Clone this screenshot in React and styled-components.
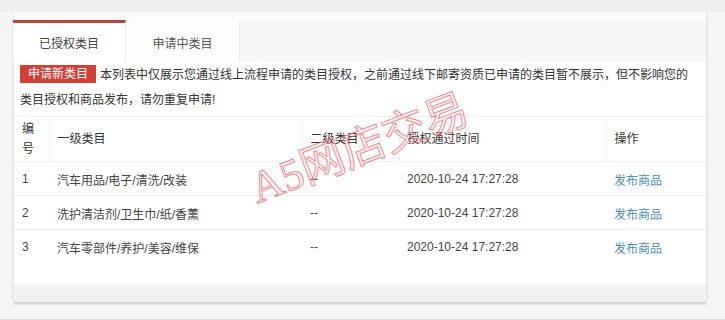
import React from "react";
import styled, { createGlobalStyle } from "styled-components";

const Global = createGlobalStyle`
  html, body { margin: 0; padding: 0; }
  body {
    width: 725px; height: 320px; overflow: hidden;
    background: #f4f4f4;
    font-family: "Liberation Sans", "Noto Sans CJK SC", sans-serif;
    font-size: 12px; color: #333;
  }
`;

const Page = styled.div`
  display: flex; flex-direction: column; height: 320px;
`;

const TopBand = styled.div`
  height: 12px;
  background: linear-gradient(#ececec, #f0f0f0);
`;

const Shell = styled.div`
  flex: 1;
  display: flex;
  background: #f6f6f6;
  padding: 0 18px 0 13px;
  border-bottom: 1px solid #dcdcdc;
`;

const Panel = styled.div`
  flex: 1;
  display: flex; flex-direction: column;
  background: #fbfbfb;
  padding-top: 8px;
  border-right: 1px solid #e6e6e6;
  margin-bottom: 17px;
  box-shadow: 0 2px 2px #cfcfcf;
`;

const TabBar = styled.div`
  display: flex; height: 42px;
  background: #f7f7f7;
`;

const Tab = styled.div`
  width: ${p => p.$w}px;
  display: flex; align-items: center; justify-content: center;
  background: ${p => (p.$active ? "#ffffff" : "#fdfdfd")};
  border-top: 3px solid ${p => (p.$active ? "#b8463c" : "transparent")};
  border-right: 1px solid #ececec;
  color: ${p => (p.$active ? "#444" : "#555")};
  font-size: 12px;
  box-sizing: border-box;
`;

const Body = styled.div`
  flex: 1;
  background: #fff;
  border-left: 1px solid #e8e8e8;
  display: flex; flex-direction: column;
`;

const Intro = styled.p`
  margin: 1px 0 0;
  padding: 0 8px 0 6px;
  line-height: 25px;
  color: #333;
`;

const Badge = styled.span`
  display: inline-block;
  background: #d23f37;
  color: #fff;
  padding: 0 8px;
  line-height: 18px;
  margin-right: 4px;
  vertical-align: 1px;
`;

const TableWrap = styled.div`
  position: relative;
  margin-top: 3px;
  border-top: 1px solid #f0f0f0;
`;

const Table = styled.table`
  width: 100%;
  border-collapse: collapse;
  table-layout: fixed;
`;

const Th = styled.th`
  text-align: left; font-weight: normal; color: #333;
  padding: 2px 8px;
  line-height: 20px;
  border-left: ${p => (p.$first ? "none" : "1px solid #f3f3f3")};
  border-bottom: 1px solid #eeeeee;
  vertical-align: middle;
`;

const Td = styled.td`
  padding: 1px 8px 0;
  height: 32px;
  color: ${p => (p.$link ? "#4b8dbd" : "#444")};
  border-bottom: 1px solid ${p => (p.$last ? "transparent" : "#f0f0f0")};
  white-space: nowrap;
`;

const Footer = styled.div`
  flex: 1;
  display: flex; flex-direction: column; justify-content: flex-end;
`;

const FooterStrip = styled.div`
  height: 16px;
  background: linear-gradient(#f3f5f5, #eef0f0);
  border-top: 1px solid #eef0ef;
`;

const Watermark = styled.div`
  position: absolute;
  left: 246px; top: 50px;
  font-family: "Liberation Serif", "Noto Sans CJK SC", serif;
  font-size: 44px;
  line-height: 44px;
  color: rgba(250, 150, 155, 0.12);
  -webkit-text-stroke: 0.9px rgba(238, 100, 110, 0.85);
  transform: rotate(-21deg);
  transform-origin: left bottom;
  pointer-events: none;
  white-space: nowrap;
`;

const rows = [
  ["1", "汽车用品/电子/清洗/改装"],
  ["2", "洗护清洁剂/卫生巾/纸/香薰"],
  ["3", "汽车零部件/养护/美容/维保"],
];

export default function App() {
  return (
    <Page>
      <Global />
      <TopBand />
      <Shell>
        <Panel>
          <TabBar>
            <Tab $active $w={113}>已授权类目</Tab>
            <Tab $w={114}>申请中类目</Tab>
          </TabBar>
          <Body>
            <Intro>
              <Badge>申请新类目</Badge>
              本列表中仅展示您通过线上流程申请的类目授权，之前通过线下邮寄资质已申请的类目暂不展示，但不影响您的类目授权和商品发布，请勿重复申请!
            </Intro>
            <TableWrap>
              <Table>
                <colgroup>
                  <col style={{ width: 35 }} />
                  <col style={{ width: 253 }} />
                  <col style={{ width: 97 }} />
                  <col style={{ width: 207 }} />
                  <col />
                </colgroup>
                <thead>
                  <tr>
                    <Th $first>编<br />号</Th>
                    <Th>一级类目</Th>
                    <Th>二级类目</Th>
                    <Th>授权通过时间</Th>
                    <Th>操作</Th>
                  </tr>
                </thead>
                <tbody>
                  {rows.map(([n, c], i) => (
                    <tr key={n}>
                      <Td $last={i === rows.length - 1}>{n}</Td>
                      <Td $last={i === rows.length - 1}>{c}</Td>
                      <Td $last={i === rows.length - 1}>--</Td>
                      <Td $last={i === rows.length - 1}>2020-10-24 17:27:28</Td>
                      <Td $last={i === rows.length - 1} $link>发布商品</Td>
                    </tr>
                  ))}
                </tbody>
              </Table>
              <Watermark>A5网店交易</Watermark>
            </TableWrap>
            <Footer>
              <FooterStrip />
            </Footer>
          </Body>
        </Panel>
      </Shell>
    </Page>
  );
}
